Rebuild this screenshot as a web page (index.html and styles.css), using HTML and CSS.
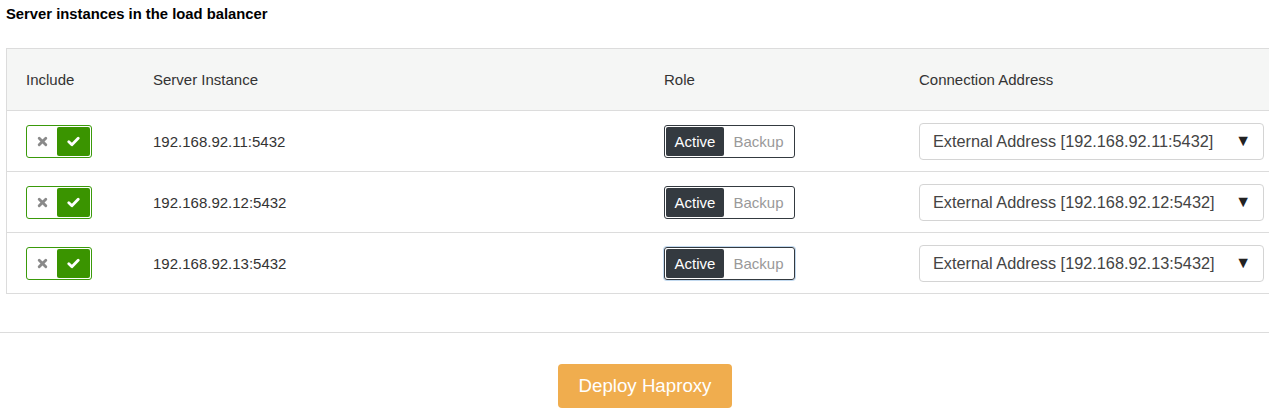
FILE: index.html
```html
<!DOCTYPE html>
<html>
<head>
<meta charset="utf-8">
<link rel="stylesheet" href="styles.css">
</head>
<body>
<div class="title">Server instances in the load balancer</div>
<div class="tbl">
  <div class="row head">
    <div class="cell">Include</div>
    <div class="cell">Server Instance</div>
    <div class="cell">Role</div>
    <div class="cell">Connection Address</div>
  </div>
  <div class="row">
    <div class="cell"><span class="inc"><span class="off"><svg width="11" height="11" viewBox="0 0 10 10"><path d="M2 2L8 8M8 2L2 8" stroke="#8a8a8a" stroke-width="2.6" stroke-linecap="round"/></svg></span><span class="on"><svg width="13" height="11" viewBox="0 0 13 11"><path d="M1.8 5.8L4.9 8.8L11.2 2.3" fill="none" stroke="#fff" stroke-width="2.8" stroke-linecap="round" stroke-linejoin="round"/></svg></span></span></div>
    <div class="cell">192.168.92.11:5432</div>
    <div class="cell"><span class="role"><span class="act">Active</span><span class="bak">Backup</span></span></div>
    <div class="cell"><span class="sel"><span>External Address [192.168.92.11:5432]</span><span class="arr">▼</span></span></div>
  </div>
  <div class="row">
    <div class="cell"><span class="inc"><span class="off"><svg width="11" height="11" viewBox="0 0 10 10"><path d="M2 2L8 8M8 2L2 8" stroke="#8a8a8a" stroke-width="2.6" stroke-linecap="round"/></svg></span><span class="on"><svg width="13" height="11" viewBox="0 0 13 11"><path d="M1.8 5.8L4.9 8.8L11.2 2.3" fill="none" stroke="#fff" stroke-width="2.8" stroke-linecap="round" stroke-linejoin="round"/></svg></span></span></div>
    <div class="cell">192.168.92.12:5432</div>
    <div class="cell"><span class="role"><span class="act">Active</span><span class="bak">Backup</span></span></div>
    <div class="cell"><span class="sel"><span>External Address [192.168.92.12:5432]</span><span class="arr">▼</span></span></div>
  </div>
  <div class="row">
    <div class="cell"><span class="inc"><span class="off"><svg width="11" height="11" viewBox="0 0 10 10"><path d="M2 2L8 8M8 2L2 8" stroke="#8a8a8a" stroke-width="2.6" stroke-linecap="round"/></svg></span><span class="on"><svg width="13" height="11" viewBox="0 0 13 11"><path d="M1.8 5.8L4.9 8.8L11.2 2.3" fill="none" stroke="#fff" stroke-width="2.8" stroke-linecap="round" stroke-linejoin="round"/></svg></span></span></div>
    <div class="cell">192.168.92.13:5432</div>
    <div class="cell"><span class="role focus"><span class="act">Active</span><span class="bak">Backup</span></span></div>
    <div class="cell"><span class="sel"><span>External Address [192.168.92.13:5432]</span><span class="arr">▼</span></span></div>
  </div>
</div>
<div class="sep"></div>
<div class="actions"><button class="deploy">Deploy Haproxy</button></div>
</body>
</html>
```
FILE: styles.css
```css
* { box-sizing: border-box; }
body {
  margin: 0;
  font-family: "Liberation Sans", Arial, sans-serif;
  color: #333;
  background: #fff;
}
.title {
  font-size: 14.8px;
  font-weight: bold;
  color: #000;
  line-height: 16px;
  padding: 6px 6px 0;
  margin-bottom: 26px;
}
.tbl {
  margin-left: 6px;
  border-left: 1px solid #dcdcdc;
  border-top: 1px solid #dcdcdc;
}
.row {
  display: grid;
  grid-template-columns: 127px 511px 255px 1fr;
  height: 61px;
  border-bottom: 1px solid #dcdcdc;
  align-items: center;
  font-size: 15px;
}
.row.head {
  height: 62px;
  background: #f5f6f5;
}
.cell {
  padding-left: 19px;
  display: flex;
  align-items: center;
}
.inc {
  display: flex;
  width: 66px;
  height: 33px;
  border: 1px solid #3a9a0a;
  border-radius: 3px;
  padding: 1px;
}
.off {
  flex: 1;
  display: flex;
  align-items: center;
  justify-content: center;
}
.on {
  width: 33px;
  background: #3a9400;
  border-radius: 2px;
  display: flex;
  align-items: center;
  justify-content: center;
}
.role {
  display: flex;
  width: 131px;
  height: 33px;
  border: 1px solid #343a40;
  border-radius: 3px;
  padding: 1px;
  font-size: 15px;
}
.role.focus {
  box-shadow: 0 0 0 1px rgba(120, 170, 220, 0.45);
}
.act {
  width: 58px;
  background: #343a40;
  color: #fff;
  border-radius: 2px;
  display: flex;
  align-items: center;
  justify-content: center;
}
.bak {
  flex: 1;
  color: #999;
  display: flex;
  align-items: center;
  justify-content: center;
}
.sel {
  display: flex;
  align-items: center;
  justify-content: space-between;
  width: 345px;
  height: 37px;
  border: 1px solid #d4d4d4;
  border-radius: 4px;
  padding: 0 12px 0 13px;
  font-size: 16.3px;
  color: #444;
}
.arr {
  font-size: 16px;
  color: #222;
}
.sep {
  margin-top: 38px;
  border-top: 1px solid #dcdcdc;
}
.actions {
  display: flex;
  justify-content: center;
  padding-left: 21px;
  padding-top: 31px;
}
.deploy {
  width: 174px;
  height: 44px;
  background: #f0ad4e;
  border: none;
  border-radius: 4px;
  color: #fff;
  font-family: "Liberation Sans", Arial, sans-serif;
  font-size: 18.7px;
}
```
